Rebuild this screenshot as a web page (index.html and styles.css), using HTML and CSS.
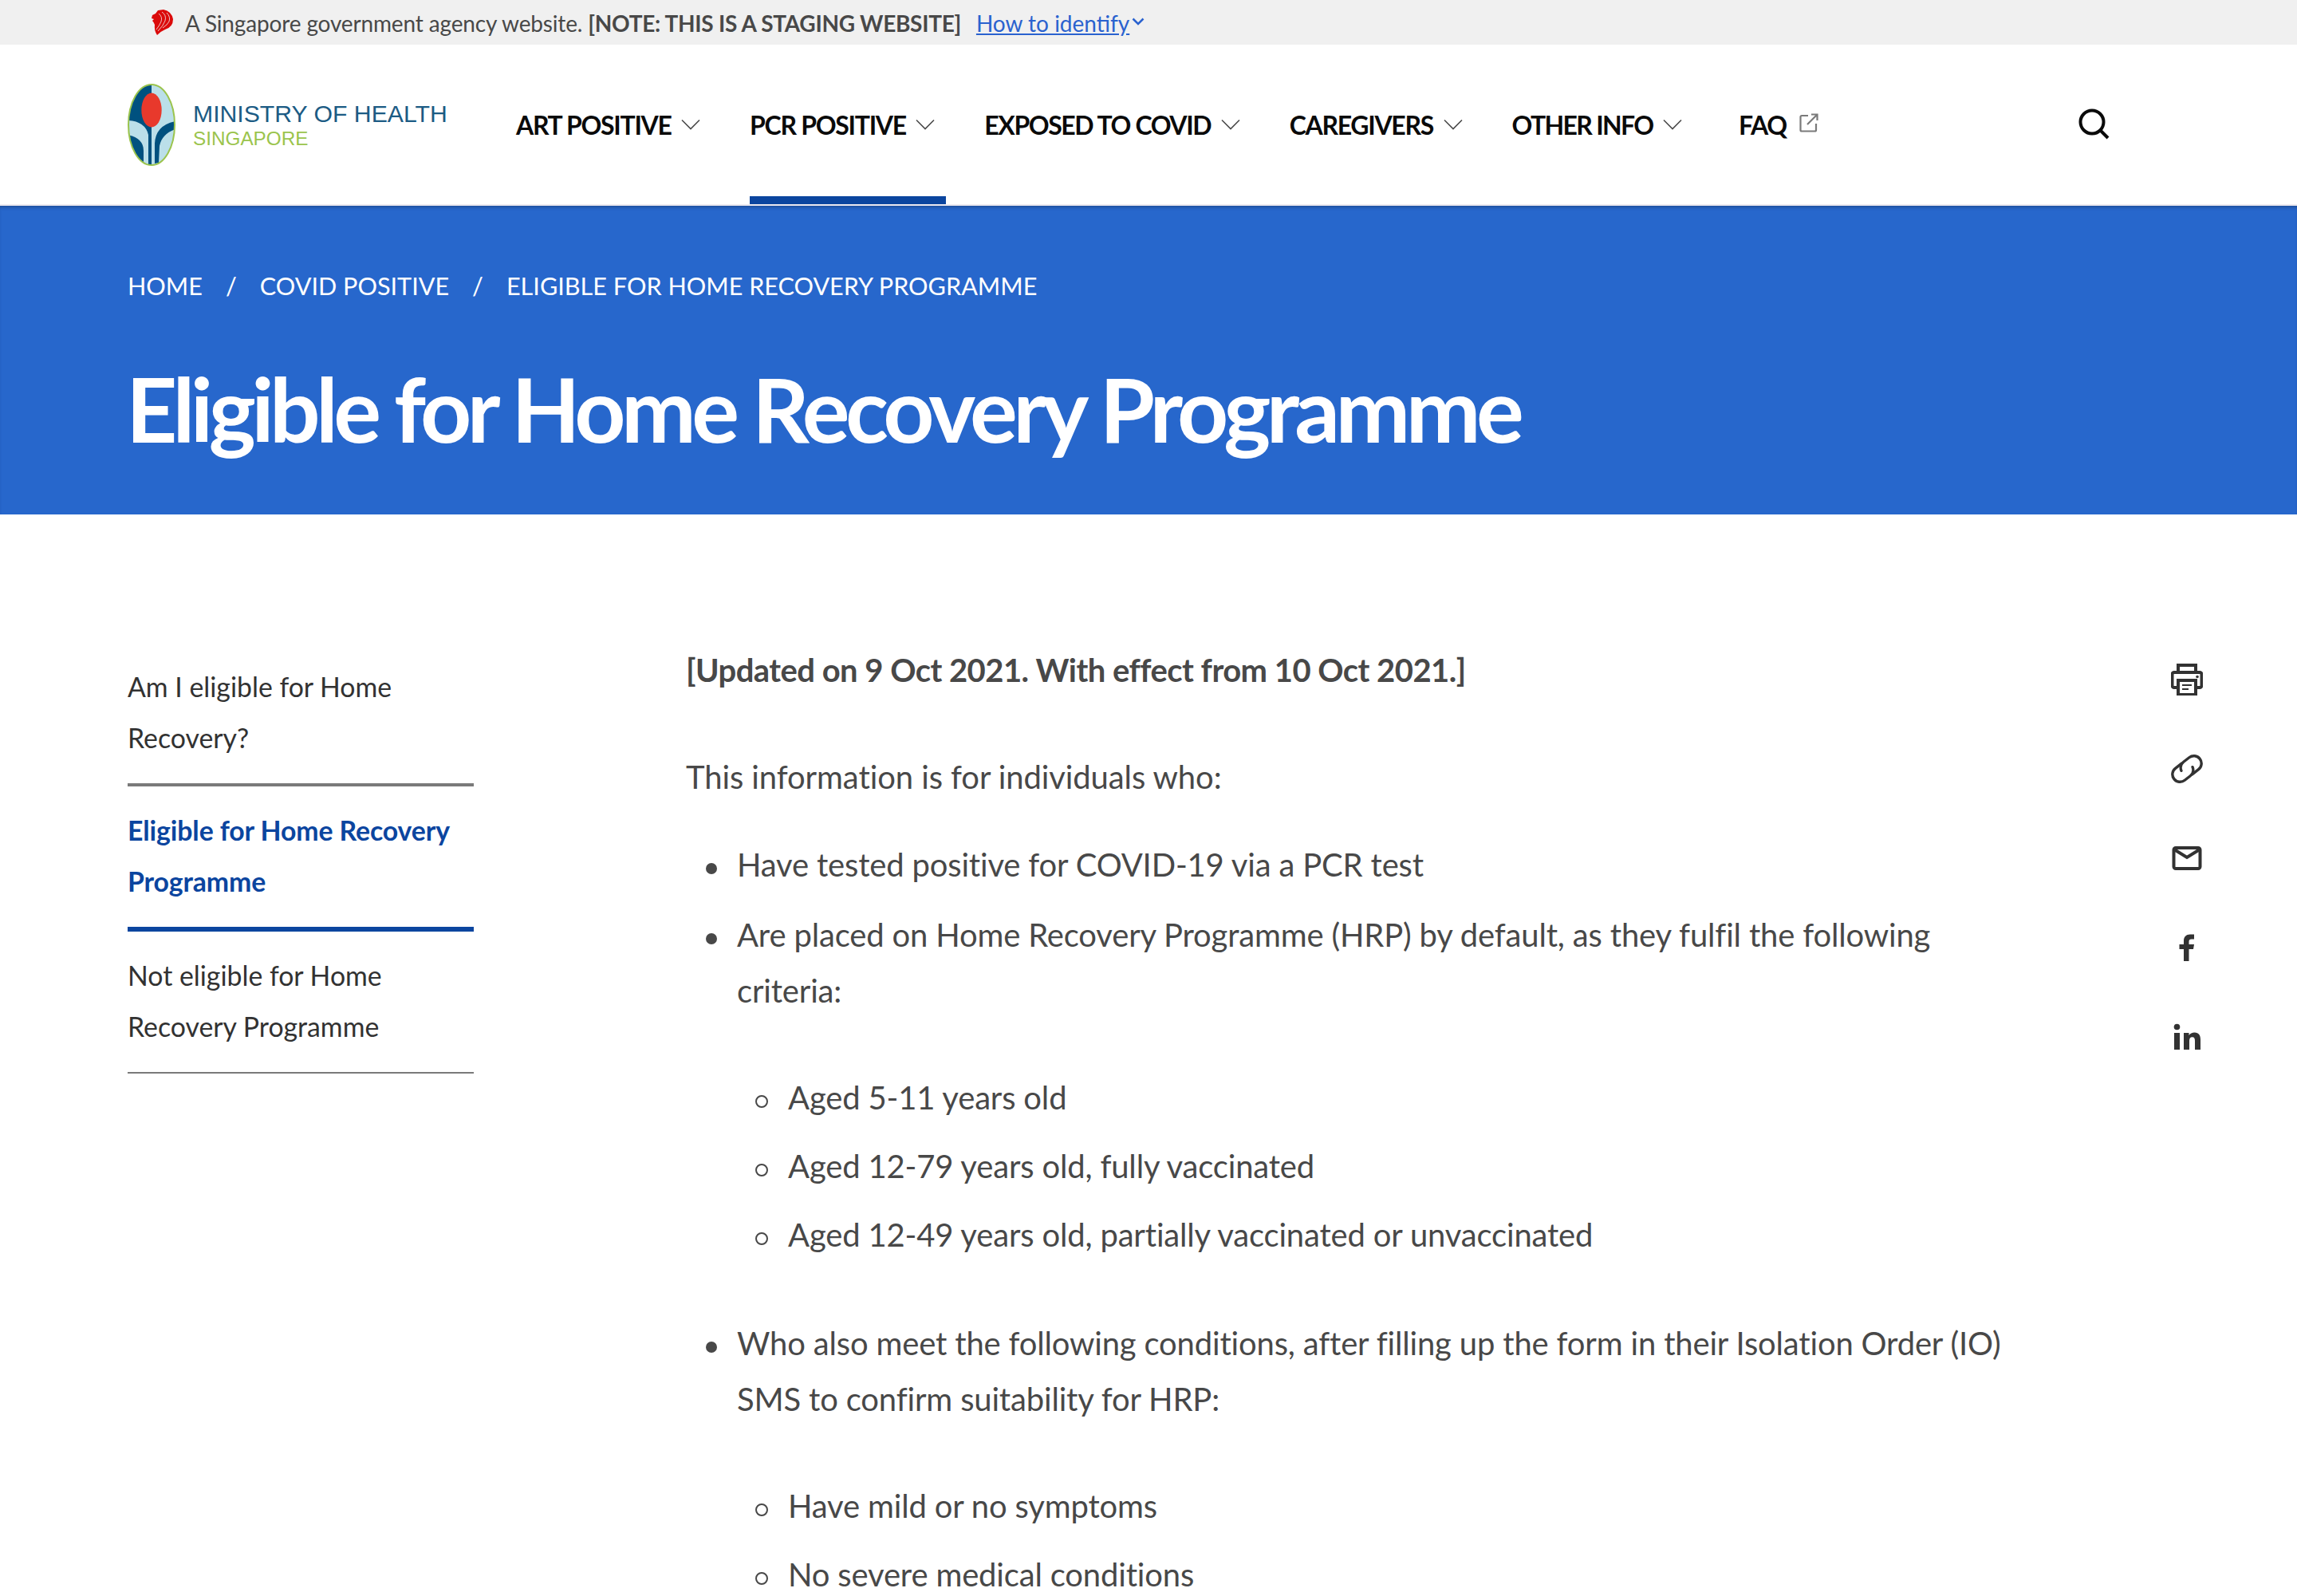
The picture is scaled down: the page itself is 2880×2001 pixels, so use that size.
FILE: index.html
```html
<!DOCTYPE html>
<html lang="en">
<head>
<meta charset="utf-8">
<title>Eligible for Home Recovery Programme</title>
<link rel="stylesheet" href="styles.css">
</head>
<body>
<div class="page">
<div class="masthead">
  <svg class="lion" viewBox="0 0 27 32" aria-hidden="true"><path fill="#db0a0a" d="M1 7 L5 5 L8 1 L15 0 Q25 2 27 12 Q27 22 17 25 Q12 27 7 32 Q3 26 4 19 Q3 16 1 14 L3 12 L0 11 Z"/><path fill="none" stroke="#f0f0f0" stroke-width=".8" d="M13 3 Q19 7 17 14 Q15 20 8 27 M19 4 Q24 9 22 15 Q20 19 14 23 M9 5 Q14 9 12 15 Q10 20 6 25"/></svg>
  <span class="mast-text">A Singapore government agency website. <b>[NOTE: THIS IS A STAGING WEBSITE]</b></span>
  <a class="mast-link" href="#">How to identify</a>
  <svg class="mast-chev" viewBox="0 0 16 10" aria-hidden="true"><path d="M1.5 1.5 L8 8 L14.5 1.5"/></svg>
</div>
<header class="header">
  <a class="logo" href="#">
    <svg class="logo-mark" viewBox="0 0 60 103" aria-hidden="true">
      <defs><clipPath id="oval"><ellipse cx="30" cy="51.5" rx="29" ry="50.5"/></clipPath></defs>
      <ellipse cx="30" cy="51.5" rx="29" ry="50.5" fill="#bbdfe9"/>
      <g clip-path="url(#oval)" fill="#00517f">
        <path d="M30 0 L0 0 L0 46 Q22 47 26 64 L26 103 L30 103 Z"/>
        <path d="M60 47 Q35 52 34 75 L34 100 L39 99 L40 78 Q43 63 60 57 Z"/>
        <path d="M0 64 Q20 68 20 84 L20 101 L12 96 Q3 82 0 64 Z"/>
      </g>
      <ellipse cx="30" cy="33" rx="12.7" ry="21.5" fill="#e8392c"/>
      <ellipse cx="30" cy="51.5" rx="29" ry="50.5" fill="none" stroke="#9bc44d" stroke-width="2"/>
    </svg>
    <span class="logo-text"><span class="logo-name">MINISTRY OF HEALTH</span><span class="logo-sub">SINGAPORE</span></span>
  </a>
  <nav class="nav">
    <a class="nav-item" href="#">ART POSITIVE<svg class="chev" viewBox="0 0 24 14"><path d="M1 1.5 L12 12.5 L23 1.5"/></svg></a>
    <a class="nav-item active" href="#">PCR POSITIVE<svg class="chev" viewBox="0 0 24 14"><path d="M1 1.5 L12 12.5 L23 1.5"/></svg></a>
    <a class="nav-item tight" href="#">EXPOSED TO COVID<svg class="chev" viewBox="0 0 24 14"><path d="M1 1.5 L12 12.5 L23 1.5"/></svg></a>
    <a class="nav-item" href="#">CAREGIVERS<svg class="chev" viewBox="0 0 24 14"><path d="M1 1.5 L12 12.5 L23 1.5"/></svg></a>
    <a class="nav-item tighter" href="#">OTHER INFO<svg class="chev" viewBox="0 0 24 14"><path d="M1 1.5 L12 12.5 L23 1.5"/></svg></a>
    <a class="nav-item external" href="#">FAQ<svg class="ext" viewBox="0 0 24 24"><path d="M11 3 H3 a1.5 1.5 0 0 0 -1.5 1.5 V21 a1.5 1.5 0 0 0 1.5 1.5 H19.500 a1.500 1.500 0 0 0 1.500 -1.500 V13 M10 14 L22.500 1.500 M15 1.500 H22.500 V9"/></svg></a>
  </nav>
  <svg class="search" viewBox="0 0 40 40" aria-hidden="true"><circle cx="17" cy="17" r="14.500"/><path d="M27.500 27.500 L37 37"/></svg>
</header>
<section class="hero">
  <ol class="crumbs">
    <li>HOME</li><li class="sep">/</li><li>COVID POSITIVE</li><li class="sep">/</li><li>ELIGIBLE FOR HOME RECOVERY PROGRAMME</li>
  </ol>
  <h1 class="title">Eligible for Home Recovery Programme</h1>
</section>
<main class="main">
  <aside class="side">
    <a class="side-item" href="#">Am I eligible for Home Recovery?</a>
    <a class="side-item current" href="#">Eligible for Home Recovery Programme</a>
    <a class="side-item last" href="#">Not eligible for Home Recovery Programme</a>
  </aside>
  <article class="content">
    <p class="updated">[Updated on 9 Oct 2021. With effect from 10 Oct 2021.]</p>
    <p class="lead">This information is for individuals who:</p>
    <ul class="list">
      <li>Have tested positive for COVID-19 via a PCR test</li>
      <li>Are placed on Home Recovery Programme (HRP) by default, as they fulfil the following criteria:
        <ul class="sublist">
          <li>Aged 5-11 years old</li>
          <li>Aged 12-79 years old, fully vaccinated</li>
          <li>Aged 12-49 years old, partially vaccinated or unvaccinated</li>
        </ul>
      </li>
      <li>Who also meet the following conditions, after filling up the form in their Isolation Order (IO) SMS to confirm suitability for HRP:
        <ul class="sublist">
          <li>Have mild or no symptoms</li>
          <li>No severe medical conditions</li>
        </ul>
      </li>
    </ul>
  </article>
  <div class="share">
    <svg class="share-icon" viewBox="0 0 40 40" aria-hidden="true"><path d="M9 11 V2 H31 V11"/><path d="M9 30 H4 a2.500 2.500 0 0 1 -2.500 -2.500 V13.500 A2.500 2.500 0 0 1 4 11 H36 a2.500 2.500 0 0 1 2.500 2.500 V27.500 A2.500 2.500 0 0 1 36 30 H31"/><rect x="9" y="21" width="22" height="18"/><path stroke-width="2" d="M14 27 H26 M14 32 H22"/><circle class="solid" cx="33" cy="16.500" r="1.800"/></svg>
    <svg class="share-icon thin" viewBox="0 0 40 40" aria-hidden="true"><g transform="rotate(-38 20 20)" stroke-linecap="round"><path d="M19 10.500 H9 a9.500 9.500 0 0 0 0 19 H18 a9.500 9.500 0 0 0 9 -7"/><path d="M21 29.500 H31 a9.500 9.500 0 0 0 0 -19 H22 a9.500 9.500 0 0 0 -9 7"/></g></svg>
    <svg class="share-icon" viewBox="0 0 40 40" aria-hidden="true"><rect x="3.500" y="7" width="33" height="26" rx="2.500"/><path d="M4 9 L20 19 L36 9"/></svg>
    <svg class="share-icon" viewBox="0 0 40 40" aria-hidden="true"><path class="solid" d="M22.500 37 V22 h5.500 l1 -6 h-6.500 v-3.500 c0 -1.800 .8 -3 3 -3 h3.500 V3.500 h-5 c-5 0 -8 3 -8 8 V16 h-5.500 v6 h5.500 v15 z"/></svg>
    <svg class="share-icon" viewBox="0 0 40 40" aria-hidden="true"><circle class="solid" cx="7.500" cy="7.500" r="3.800"/><path class="solid" d="M4 15 h7 v21 H4 z M16 15 h6.500 v3 c1.500 -2.300 4 -3.600 7 -3.600 c5.500 0 7.500 3.600 7.500 9 V36 h-7 V25 c0 -2.800 -.8 -4.700 -3.300 -4.700 c-2.700 0 -3.700 2 -3.700 4.700 V36 h-7 z"/></svg>
  </div>
</main>
</div>
</body>
</html>
```
FILE: styles.css
```css
html, body { margin: 0; padding: 0; background: #fff; }
body { font-family: "Lato", "Noto Sans", sans-serif; color: #484848; }
a { color: inherit; text-decoration: none; }
.page { height: 2001px; overflow: hidden; }

.masthead { height: 56px; box-sizing: border-box; padding-top: 2px; background: #f0f0f0; display: flex; align-items: center; padding-left: 190px; font-size: 28px; color: #484848; }
.lion { width: 27px; height: 32px; margin-right: 15px; margin-top: -2px; flex: none; }
.mast-text { letter-spacing: -0.15px; }
.mast-text b { font-weight: 700; letter-spacing: -0.3px; }
.mast-link { color: #2a62cf; text-decoration: underline; margin-left: 19px; }
.mast-chev { width: 16px; height: 10px; margin-left: 3px; margin-top: -4px; fill: none; stroke: #2a62cf; stroke-width: 2.500; }

.header { height: 200px; border-bottom: 2px solid #ece9ef; display: flex; align-items: stretch; padding-left: 160px; padding-right: 234px; }
.logo { display: flex; align-items: center; width: 487px; flex: none; }
.logo-mark { width: 60px; height: 103px; flex: none; margin-right: 22px; }
.logo-text { display: flex; flex-direction: column; font-family: "Liberation Sans", Arial, sans-serif; line-height: 1; padding-top: 2px; }
.logo-name { font-size: 30.200px; color: #1c5b84; }
.logo-sub { font-size: 24.300px; color: #9bc44d; margin-top: 4px; }

.nav { display: flex; gap: 48px; }
.nav-item { display: flex; align-items: center; padding-right: 14px; border-top: 10px solid transparent; border-bottom: 10px solid transparent; font-size: 32px; font-weight: 700; letter-spacing: -1.3px; color: #0a0a0a; }
.nav-item.active { border-bottom-color: #0b459f; }
.nav-item.tight { letter-spacing: -1.42px; }
.nav-item.tighter { letter-spacing: -1.66px; }
.nav-item.external { margin-left: 9px; }
.chev { width: 24px; height: 14px; margin-left: 12.500px; fill: none; stroke: #4a4a4a; stroke-width: 1.600; }
.ext { width: 24px; height: 24px; margin-left: 16px; margin-top: -4px; fill: none; stroke: #7a7a7a; stroke-width: 2.200; }
.search { width: 40px; height: 40px; margin: auto 0 auto auto; fill: none; stroke: #0a0a0a; stroke-width: 4; }

.hero { height: 387px; background: #2767cc; box-shadow: inset 0 4px 4px -2px rgba(0,0,0,.25); padding-left: 160px; color: #fff; box-sizing: border-box; }
.crumbs { list-style: none; margin: 0; padding: 83px 0 0; display: flex; font-size: 30.600px; line-height: 36px; font-weight: 400; }
.sep { padding: 0 29px; }
.title { margin: 60px 0 0 -2px; font-size: 112px; line-height: 150px; font-weight: 700; letter-spacing: -5.6px; color: #fff; }

.main { display: grid; grid-template-columns: 434px 1fr 350px; padding-left: 160px; }
.side { display: flex; flex-direction: column; padding-top: 184px; }
.side-item { display: block; font-size: 33.800px; line-height: 64px; color: #323232; padding: 0 0 25px; margin-bottom: 23px; border-bottom: 4px solid #7a7a7a; }
.side-item.current { color: #0b459f; font-weight: 700; letter-spacing: -0.1px; border-bottom: 6px solid #0b459f; }
.side-item.last { border-bottom-width: 2px; margin-bottom: 0; }

.content { margin-left: 266px; padding-top: 160px; font-size: 40px; line-height: 70px; letter-spacing: -0.17px; color: #484848; }
.updated { margin: 0; font-weight: 700; letter-spacing: -0.54px; }
.lead { margin: 64px 0 0; letter-spacing: -0.09px; }
.list { list-style: none; margin: 40px 0 0; padding: 0 0 0 64px; }
.list > li { margin-bottom: 18px; }
.list > li::before { content: ""; display: inline-block; box-sizing: border-box; width: 14px; height: 14px; margin-left: -39px; margin-right: 25px; border-radius: 50%; background: #484848; vertical-align: middle; }
.sublist { list-style: none; margin: 64px 0 66px; padding-left: 64px; }
.sublist li { margin-bottom: 16px; }
.sublist li::before { content: ""; display: inline-block; box-sizing: border-box; width: 16px; height: 16px; margin-left: -41px; margin-right: 25px; border: 2px solid #484848; border-radius: 50%; vertical-align: middle; }

.share { display: flex; flex-direction: column; align-items: flex-end; padding-top: 187px; gap: 72px; padding-right: 118px; }
.share-icon { width: 40px; height: 40px; fill: none; stroke: #323232; stroke-width: 4; flex: none; }
.share-icon.thin { stroke-width: 3.400; }
.solid { fill: #323232; stroke: none; }
.share-icon rect { fill: #fff; }
```
